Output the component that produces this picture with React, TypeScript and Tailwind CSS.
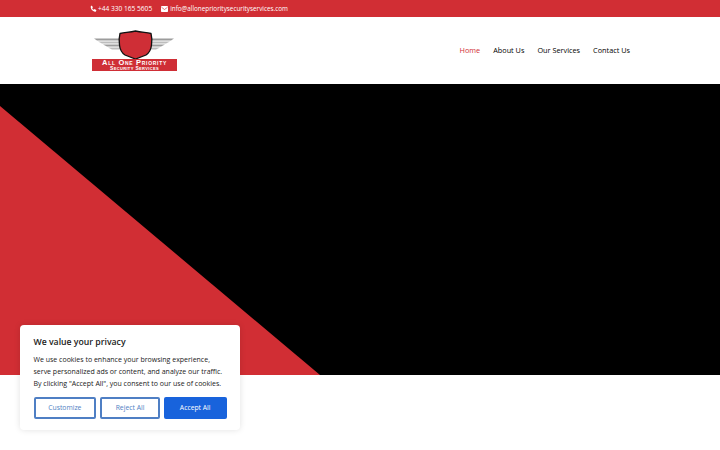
const navItems = ['Home', 'About Us', 'Our Services', 'Contact Us']

function Logo() {
  return (
    <div className="relative w-[86px] h-[41px]">
      <svg width="86" height="30" viewBox="0 0 86 30" className="absolute left-0 top-0">
        {/* wings */}
        <path d="M2 8.5H28V10.5H5Z" fill="#9c9c9c" />
        <path d="M6 11.5H28V13.5H10Z" fill="#bdbdbd" />
        <path d="M11 14.5H28V16.5H15Z" fill="#9c9c9c" />
        <path d="M16 17.5H28V19.5H20Z" fill="#bdbdbd" />
        <path d="M82 8.5H58V10.5H79Z" fill="#9c9c9c" />
        <path d="M78 11.5H58V13.5H74Z" fill="#bdbdbd" />
        <path d="M73 14.5H58V16.5H69Z" fill="#9c9c9c" />
        <path d="M68 17.5H58V19.5H64Z" fill="#bdbdbd" />
        {/* shield */}
        <path
          d="M28 3.5C34 2.5 38 2 43.5 1C49 2 53 2.5 59 3.5C60 7 60 11 59.500 15C59 20 57 23 54 25L43.5 29L33 25C30 23 28 20 27.500 15C27 11 27 7 28 3.5Z"
          fill="#cf2e36"
          stroke="#111111"
          strokeWidth="1.3"
        />
      </svg>
      <div className="absolute left-0 bottom-0 w-[85px] h-[12px] bg-[#cf2e36] flex flex-col items-center justify-center text-white font-['Liberation_Sans',sans-serif] font-bold leading-none">
        <span className="text-[7.5px] leading-[6.5px] tracking-[0.7px] [font-variant:small-caps] whitespace-nowrap">All One Priority</span>
        <span className="text-[5px] leading-[4.5px] tracking-[0.35px] [font-variant:small-caps] whitespace-nowrap">Security Services</span>
      </div>
    </div>
  )
}

export default function App() {
  return (
    <div className="relative w-[720px] h-[450px] overflow-hidden bg-white font-['Open_Sans','Noto_Sans',sans-serif]">
      {/* Top bar */}
      <div className="h-[17px] bg-[#d12e34] text-white text-[6.6px] font-medium flex items-center pl-[90px]">
        <svg width="7" height="7" viewBox="0 0 24 24" fill="white" className="mr-[1px]">
          <path d="M6 2l4 6-2.500 3c1 2.500 3 4.500 5.500 5.500l3-2.500 6 4-2 4c-.5 1-1.500 1.500-2.500 1.500C9 22 2 14 2.500 5.500 2.500 4.500 3 3.500 4 3Z" />
        </svg>
        <span>+44 330 165 5605</span>
        <svg width="7" height="6" viewBox="0 0 14 12" className="ml-[9px] mr-[2px]">
          <rect width="14" height="12" rx="1.500" fill="white" />
          <path d="M1 2.500L7 7l6-4.500" fill="none" stroke="#d12e34" strokeWidth="1.300" />
        </svg>
        <span className="text-[6.35px]">info@alloneprioritysecurityservices.com</span>
      </div>

      {/* Header */}
      <div className="h-[67px] flex items-center justify-between pl-[92px] pr-[90px]">
        <Logo />
        <nav className="flex gap-[13px] text-[7.3px] font-medium text-black">
          {navItems.map((item, i) => (
            <span key={item} className={i === 0 ? 'text-[#d12e34]' : ''}>{item}</span>
          ))}
        </nav>
      </div>

      {/* Hero */}
      <div className="h-[291px] bg-black">
        <svg width="720" height="291" viewBox="0 0 720 291" className="block">
          <path d="M0 22L320 291H0Z" fill="#d12e34" />
        </svg>
      </div>

      {/* Cookie banner */}
      <div className="absolute left-[20px] top-[325px] w-[220px] h-[105px] bg-white rounded-[4px] shadow-[0_0_6px_rgba(0,0,0,0.12)] px-[13.5px] pt-[11px]">
        <h2 className="text-[8.7px] leading-[13px] font-semibold text-[#212121]">We value your privacy</h2>
        <p className="mt-[5px] text-[7px] leading-[12px] text-[#212121]">
          We use cookies to enhance your browsing experience, serve personalized ads or content, and analyze our traffic. By clicking "Accept All", you consent to our use of cookies.
        </p>
        <div className="mt-[7px] flex gap-[4px] text-[6.8px] font-medium">
          <button className="w-[63px] h-[22px] border-2 border-[#4f7fc4] rounded-[2px] text-[#4f7fc4]">Customize</button>
          <button className="w-[60px] h-[22px] border-2 border-[#4f7fc4] rounded-[2px] text-[#4f7fc4]">Reject All</button>
          <button className="w-[63px] h-[22px] bg-[#1863dc] rounded-[2px] text-white">Accept All</button>
        </div>
      </div>
    </div>
  )
}
